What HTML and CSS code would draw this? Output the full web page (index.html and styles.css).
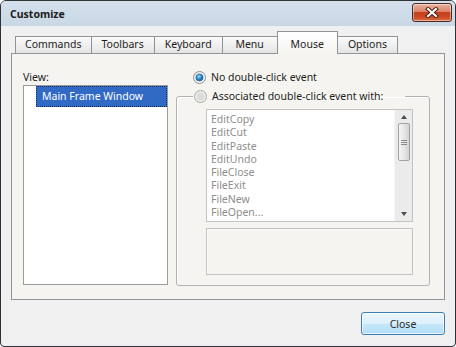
FILE: index.html
```html
<!DOCTYPE html>
<html>
<head>
    <title>Customize</title>
    <meta charset="UTF-8">
    <link rel="stylesheet" href="styles.css">
</head>
<body>
    <div class="window">
        <div class="titlebar">
            <span class="title">Customize</span>
            <button class="close-x" title="Close">
                <svg width="14" height="11" viewBox="0 0 14 11">
                    <path d="M3 2 L11 9 M11 2 L3 9" stroke="#4a2418" stroke-width="4" stroke-linecap="square"/>
                    <path d="M3 2 L11 9 M11 2 L3 9" stroke="#ffffff" stroke-width="2" stroke-linecap="square"/>
                </svg>
            </button>
        </div>

        <div class="body">
            <div class="tab-row">
                <div class="tab">Commands</div>
                <div class="tab">Toolbars</div>
                <div class="tab">Keyboard</div>
                <div class="tab">Menu</div>
                <div class="tab active">Mouse</div>
                <div class="tab">Options</div>
            </div>

            <div class="panel">
                <div class="view-col">
                    <label class="field-label">View:</label>
                    <div class="tree">
                        <div class="tree-item selected">Main Frame Window</div>
                    </div>
                </div>

                <div class="mouse-col">
                    <label class="radio">
                        <svg class="radio-dot" width="13" height="13" viewBox="0 0 13 13">
                            <defs>
                                <linearGradient id="ring" x1="0" y1="0" x2="1" y2="1">
                                    <stop offset="0" stop-color="#e6e6e6"/>
                                    <stop offset="1" stop-color="#ffffff"/>
                                </linearGradient>
                                <radialGradient id="dot" cx="0.4" cy="0.35" r="0.7">
                                    <stop offset="0" stop-color="#9fdcfb"/>
                                    <stop offset="0.5" stop-color="#2d8bd2"/>
                                    <stop offset="1" stop-color="#135c9f"/>
                                </radialGradient>
                            </defs>
                            <circle cx="6.5" cy="6.5" r="6" fill="url(#ring)" stroke="#8c8f94"/>
                            <circle cx="6.5" cy="6.5" r="3.6" fill="url(#dot)" stroke="#1d5a8c" stroke-width="0.6"/>
                        </svg>
                        No double-click event
                    </label>

                    <fieldset class="group">
                        <legend class="radio disabled">
                            <svg class="radio-dot" width="13" height="13" viewBox="0 0 13 13">
                                <circle cx="6.5" cy="6.5" r="6" fill="#eeeeee" stroke="#a9a9a9"/>
                                <circle cx="6.5" cy="6.5" r="4" fill="#dcdcdc"/>
                            </svg>
                            Associated double-click event with:
                        </legend>
                        <div class="group-body">
                            <div class="cmd-list">
                                <ul>
                                    <li>EditCopy</li>
                                    <li>EditCut</li>
                                    <li>EditPaste</li>
                                    <li>EditUndo</li>
                                    <li>FileClose</li>
                                    <li>FileExit</li>
                                    <li>FileNew</li>
                                    <li>FileOpen...</li>
                                </ul>
                                <div class="scrollbar">
                                    <span class="arrow up"></span>
                                    <span class="thumb"><span class="grip"></span></span>
                                    <span class="arrow down"></span>
                                </div>
                            </div>
                            <div class="desc-box"></div>
                        </div>
                    </fieldset>
                </div>
            </div>

            <div class="footer">
                <button class="btn">Close</button>
            </div>
        </div>
    </div>
</body>
</html>
```

FILE: styles.css
```css
* {
    box-sizing: border-box;
    margin: 0;
    padding: 0;
}

body {
    font-family: 'Noto Sans', 'DejaVu Sans', sans-serif;
    font-size: 10.5px;
    color: #1e1e1e;
    background: #ffffff;
}

.window {
    width: 456px;
    height: 347px;
    border: 1px solid #2e3236;
    border-radius: 6px 6px 4px 4px;
    background: #f0f0f0;
    display: flex;
    flex-direction: column;
    overflow: hidden;
}

/* title bar */
.titlebar {
    height: 25px;
    flex: none;
    display: flex;
    align-items: center;
    justify-content: space-between;
    padding: 0 3px 0 9px;
    background: linear-gradient(#d4e0ec, #c9d7e5);
}

.title {
    font-weight: 700;
    font-size: 10.5px;
    color: #1c1c1c;
}

.close-x {
    align-self: flex-start;
    margin-top: 2px;
    width: 40px;
    height: 19px;
    border: 1px solid #4b2a24;
    border-radius: 3px;
    background: linear-gradient(#eab3a4 0%, #d98266 45%, #c4401f 50%, #cd4b27 80%, #e2734a 100%);
    box-shadow: inset 0 0 0 1px rgba(255, 255, 255, 0.45);
    display: flex;
    align-items: center;
    justify-content: center;
}

/* body */
.body {
    flex: 1;
    padding: 5px 10px 0;
}

.tab-row {
    display: flex;
    align-items: flex-end;
    height: 22px;
    margin-left: 4px;
}

.tab {
    height: 17px;
    min-width: 56px;
    line-height: 15px;
    padding: 0 10px;
    text-align: center;
    border: 1px solid #8f9296;
    border-bottom: none;
    margin-left: -1px;
    background: linear-gradient(#fbfbfb, #e4e4e4);
    color: #1e1e1e;
}

.tab:first-child {
    margin-left: 0;
    padding: 0 9px;
}

.tab.active {
    position: relative;
    z-index: 1;
    height: 23px;
    padding: 5px 13px 0;
    margin: 0 0 -1px -1px;
    background: linear-gradient(#ffffff, #f5f4f0);
}

.panel {
    height: 247px;
    border: 1px solid #939698;
    background: #f5f4f0;
    display: flex;
    gap: 8px;
    padding: 15px 14px 14px 11px;
}

.view-col {
    width: 145px;
    display: flex;
    flex-direction: column;
}

.field-label {
    display: block;
    line-height: 16px;
    height: 16px;
}

.tree {
    height: 200px;
    border: 1px solid #999b9e;
    background: #ffffff;
    padding-left: 12px;
}

.tree-item {
    height: 21px;
    line-height: 19px;
    padding-left: 5px;
}

.tree-item.selected {
    background: #316ac5;
    color: #ffffff;
    border: 1px dotted #1b2f52;
}

.mouse-col {
    width: 254px;
    display: flex;
    flex-direction: column;
}

.radio {
    display: flex;
    align-items: center;
    gap: 5px;
    height: 16px;
    line-height: 16px;
    color: #1e1e1e;
}

.mouse-col > .radio {
    padding-left: 17px;
}

.radio-dot {
    flex: none;
}

.group {
    margin-top: 3px;
    height: 198px;
    border: 1px solid #b2b2b2;
    border-radius: 3px;
    box-shadow: inset 1px 1px 0 #ffffff;
    padding: 0;
}

.group legend {
    margin-left: 16px;
    padding: 0 22px 0 1px;
}

.group-body {
    padding: 5px 16px 10px 29px;
}

.cmd-list {
    height: 113px;
    border: 1px solid #c3c3c3;
    background: #ffffff;
    display: flex;
}

.cmd-list ul {
    flex: 1;
    list-style: none;
    padding: 3px 0 0 4px;
    line-height: 13.3px;
    color: #8e8e8e;
    overflow: hidden;
}

.scrollbar {
    width: 18px;
    background: #ebebec;
    border-left: 1px solid #f4f4f4;
    display: flex;
    flex-direction: column;
    align-items: center;
    padding: 5px 0 5px;
}

.arrow {
    width: 0;
    height: 0;
    border-left: 3px solid transparent;
    border-right: 3px solid transparent;
}

.arrow.up {
    border-bottom: 4px solid #4d4d4d;
}

.arrow.down {
    margin-top: auto;
    border-top: 4px solid #4d4d4d;
}

.thumb {
    margin-top: 4px;
    width: 12px;
    height: 38px;
    border: 1px solid #a2a2a2;
    border-radius: 2px;
    background: linear-gradient(90deg, #f6f6f6, #e6e6e6 50%, #d2d2d2);
    display: flex;
    align-items: center;
    justify-content: center;
}

.grip {
    width: 6px;
    height: 5px;
    border-top: 1px solid #8a8a8a;
    border-bottom: 1px solid #8a8a8a;
    background: linear-gradient(transparent 1px, #8a8a8a 1px, #8a8a8a 2px, transparent 2px);
}

.desc-box {
    margin-top: 6px;
    height: 47px;
    border: 1px solid #c3c3c3;
    box-shadow: inset 1px 1px 0 #fbfbfb;
    background: #f5f4f0;
}

.footer {
    display: flex;
    justify-content: flex-end;
    padding-top: 12px;
}

.btn {
    width: 84px;
    height: 23px;
    border: 1px solid #3c7fb1;
    border-radius: 3px;
    background: linear-gradient(#ecf7fd 0%, #dcf0fb 50%, #c6e7fa 51%, #b3ddf5 100%);
    box-shadow: inset 0 0 0 1px rgba(255, 255, 255, 0.7);
    font-family: inherit;
    font-size: 10.5px;
    color: #2a2a2a;
}
```
